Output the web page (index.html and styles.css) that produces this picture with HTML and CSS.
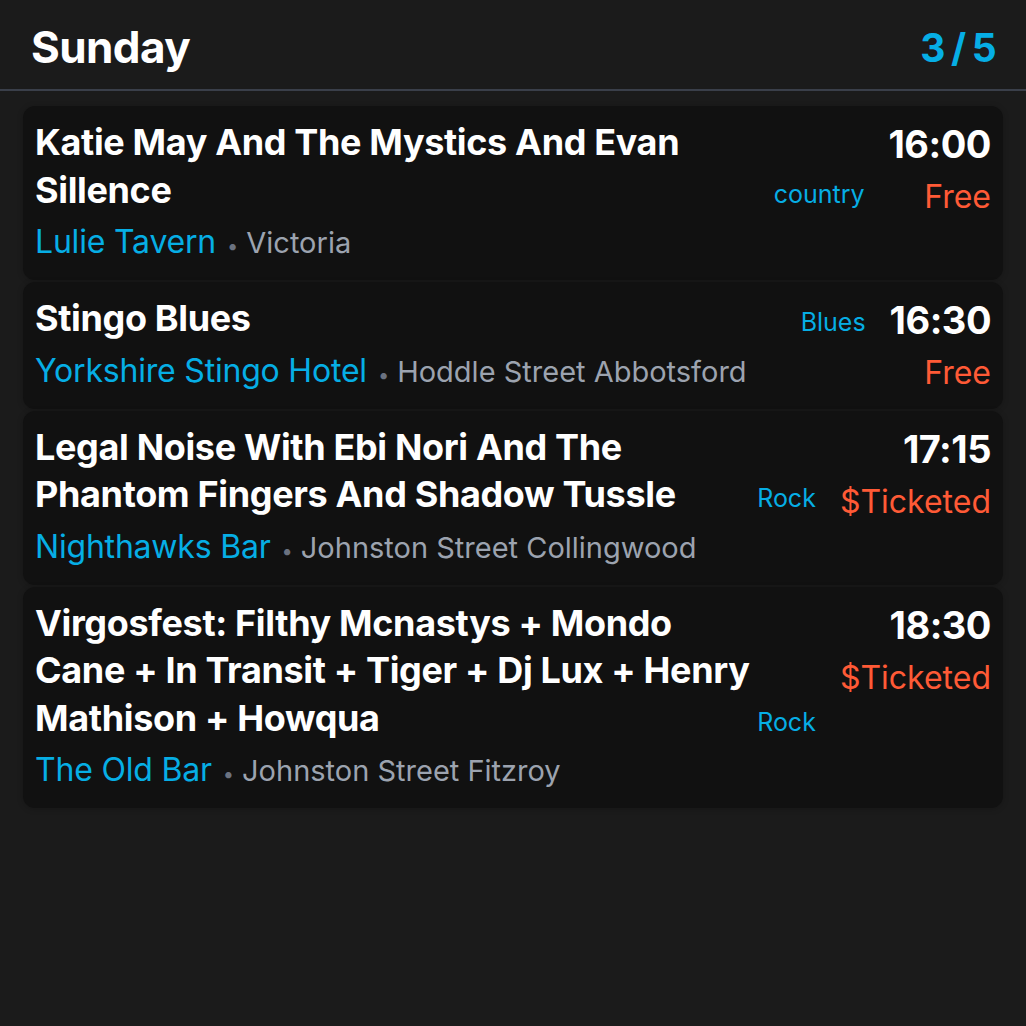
FILE: index.html
```html
<!DOCTYPE html>
<html lang="en">
<head>
<meta charset="utf-8">
<title>Sunday</title>
<link rel="stylesheet" href="styles.css">
</head>
<body>
<header class="day-header">
  <h1 class="day-title">Sunday</h1>
  <div class="day-count">3 / 5</div>
</header>
<main class="gig-list">
  <article class="gig">
    <div class="gig-main">
      <div class="gig-title-row">
        <h2 class="gig-title">Katie May And The Mystics And Evan Sillence</h2>
        <span class="gig-genre">country</span>
      </div>
      <div class="gig-venue-row"><span class="gig-venue">Lulie Tavern</span><span class="gig-dot">•</span><span class="gig-place">Victoria</span></div>
    </div>
    <div class="gig-side">
      <div class="gig-time">16:00</div>
      <div class="gig-price">Free</div>
    </div>
  </article>
  <article class="gig">
    <div class="gig-main">
      <div class="gig-title-row">
        <h2 class="gig-title">Stingo Blues</h2>
        <span class="gig-genre">Blues</span>
      </div>
      <div class="gig-venue-row"><span class="gig-venue">Yorkshire Stingo Hotel</span><span class="gig-dot">•</span><span class="gig-place">Hoddle Street Abbotsford</span></div>
    </div>
    <div class="gig-side">
      <div class="gig-time">16:30</div>
      <div class="gig-price">Free</div>
    </div>
  </article>
  <article class="gig">
    <div class="gig-main">
      <div class="gig-title-row">
        <h2 class="gig-title">Legal Noise With Ebi Nori And The Phantom Fingers And Shadow Tussle</h2>
        <span class="gig-genre">Rock</span>
      </div>
      <div class="gig-venue-row"><span class="gig-venue">Nighthawks Bar</span><span class="gig-dot">•</span><span class="gig-place">Johnston Street Collingwood</span></div>
    </div>
    <div class="gig-side">
      <div class="gig-time">17:15</div>
      <div class="gig-price">$Ticketed</div>
    </div>
  </article>
  <article class="gig">
    <div class="gig-main">
      <div class="gig-title-row">
        <h2 class="gig-title">Virgosfest: Filthy Mcnastys + Mondo Cane + In Transit + Tiger + Dj Lux + Henry Mathison + Howqua</h2>
        <span class="gig-genre">Rock</span>
      </div>
      <div class="gig-venue-row"><span class="gig-venue">The Old Bar</span><span class="gig-dot">•</span><span class="gig-place">Johnston Street Fitzroy</span></div>
    </div>
    <div class="gig-side">
      <div class="gig-time">18:30</div>
      <div class="gig-price">$Ticketed</div>
    </div>
  </article>
</main>
</body>
</html>
```
FILE: styles.css
```css
* { box-sizing: border-box; }

html, body {
  margin: 0;
  padding: 0;
  background: #1b1b1b;
  color: #ffffff;
  font-family: Inter, "Noto Sans", "Liberation Sans", sans-serif;
}

.day-header {
  display: flex;
  justify-content: space-between;
  align-items: center;
  height: 91px;
  padding: 21px 31px 15px 31px;
  border-bottom: 2px solid #3a3f4a;
}

.day-title {
  margin: 0;
  font-size: 44px;
  line-height: 53px;
  font-weight: 700;
  letter-spacing: -0.6px;
}

.day-count {
  font-size: 39px;
  line-height: 47px;
  font-weight: 700;
  color: #06aee5;
  letter-spacing: -1.8px;
}

.gig-list {
  display: flex;
  flex-direction: column;
  gap: 2px;
  padding: 15px 23px;
}

.gig {
  display: flex;
  gap: 24px;
  background: #111111;
  border-radius: 12px;
  padding: 13px 12px 14px 12px;
  box-shadow: 0 1px 6px rgba(0, 0, 0, 0.2);
}

.gig-main {
  flex: 1;
  min-width: 0;
}

.gig-title-row {
  display: flex;
  align-items: last baseline;
  gap: 4px;
}

.gig-title {
  flex: 1;
  min-width: 0;
  margin: 0;
  font-size: 36px;
  line-height: 47.5px;
  font-weight: 700;
  letter-spacing: -0.35px;
}

.gig-genre {
  flex-shrink: 0;
  font-size: 25px;
  line-height: 30px;
  color: #06aee5;
}

.gig-venue-row {
  margin-top: 4px;
  font-size: 32px;
  line-height: 48px;
  height: 48px;
  white-space: nowrap;
}

.gig-venue {
  line-height: 1;
  color: #06aee5;
  letter-spacing: -0.2px;
}

.gig-dot {
  font-size: 20px;
  line-height: 1;
  color: #6b7280;
  margin: 0 8px 0 11px;
}

.gig-place {
  font-size: 29px;
  line-height: 1;
  color: #9ca3af;
}

.gig-side {
  display: flex;
  flex-direction: column;
  align-items: flex-end;
  flex-shrink: 0;
}

.gig-time {
  font-size: 38px;
  line-height: 50px;
  font-weight: 700;
  letter-spacing: -0.5px;
}

.gig-price {
  margin-top: 9px;
  font-size: 32px;
  line-height: 38px;
  color: #ff5a36;
}
```
